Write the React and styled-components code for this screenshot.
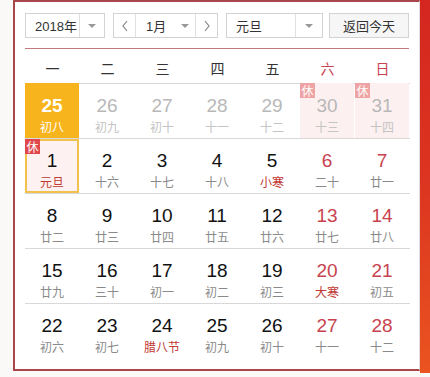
import React from "react";
import styled, { createGlobalStyle } from "styled-components";

const Global = createGlobalStyle`
  html, body { margin: 0; padding: 0; background: #fbf8f8; }
  body { font-family: "Liberation Sans", "Noto Sans CJK SC", sans-serif; }
`;

const Page = styled.div`
  display: flex;
  align-items: flex-start;
  padding-left: 13px;
  width: 430px;
  height: 377px;
  box-sizing: border-box;
  overflow: hidden;
`;

const Panel = styled.div`
  width: 407px;
  height: 371px;
  box-sizing: border-box;
  background: #fff;
  border: 2px solid #a8464b;
  border-right: 1px solid #e2dede;
  padding: 11px 9px 0 10px;
  display: flex;
  flex-direction: column;
`;

const Strip = styled.div`
  width: 10px;
  height: 373px;
  background: linear-gradient(180deg, #d4261f 0%, #dc3520 50%, #ea5420 100%);
`;

const Toolbar = styled.div`
  display: flex;
  align-items: center;
  height: 25px;
  gap: 8px;
`;

const Box = styled.div`
  display: flex;
  align-items: stretch;
  height: 25px;
  box-sizing: border-box;
  border: 1px solid #d3d3d3;
  background: #fff;
  width: ${(p) => p.$w}px;
  margin-right: ${(p) => p.$mr || 0}px;
`;

const BoxText = styled.div`
  flex: 1;
  display: flex;
  align-items: center;
  white-space: nowrap;
  padding-left: ${(p) => p.$pl}px;
  font-size: 13px;
  color: #333;
  font-family: "Liberation Sans", "Noto Sans CJK SC", sans-serif;
`;

const ArrowCell = styled.div`
  width: ${(p) => p.$w}px;
  flex-shrink: 0;
  border-left: 1px solid #e0e0e0;
  display: flex;
  align-items: center;
  justify-content: center;
`;

const ArrowNoBorder = styled.div`
  width: 20px;
  display: flex;
  align-items: center;
  justify-content: center;
`;

const Tri = styled.span`
  width: 0;
  height: 0;
  border-left: 4px solid transparent;
  border-right: 4px solid transparent;
  border-top: 4px solid #999;
`;

const NavBtn = styled.div`
  width: 21px;
  flex-shrink: 0;
  display: flex;
  align-items: center;
  justify-content: center;
  border-left: ${(p) => (p.$left ? "1px solid #e0e0e0" : "none")};
  border-right: ${(p) => (p.$right ? "1px solid #e0e0e0" : "none")};
`;

const TodayBtn = styled.div`
  width: 80px;
  height: 25px;
  box-sizing: border-box;
  border: 1px solid #d3d3d3;
  background: #f6f6f6;
  display: flex;
  align-items: center;
  justify-content: center;
  font-size: 13px;
  color: #333;
  font-family: "Noto Sans CJK SC", sans-serif;
`;

const Rule = styled.div`
  height: 1px;
  background: #c07a7d;
  margin-top: 10px;
  width: 384px;
`;

const Grid = styled.div`
  display: grid;
  grid-template-columns: repeat(7, 55px);
`;

const Head = styled.div`
  height: 34px;
  display: flex;
  align-items: center;
  justify-content: center;
  padding-top: 3px;
  box-sizing: border-box;
  font-size: 14px;
  font-family: "Noto Sans CJK SC", sans-serif;
  color: ${(p) => (p.$red ? "#c8424f" : "#333")};
`;

const Row = styled.div`
  display: grid;
  grid-template-columns: repeat(7, 55px);
  border-top: 1px solid #d8d8d8;
  height: 55px;
  box-sizing: border-box;
  width: 385px;
`;

const Cell = styled.div`
  position: relative;
  width: 54px;
  height: ${(p) => (p.$fill ? 55 : 54)}px;
  margin-top: ${(p) => (p.$fill ? -1 : 0)}px;
  box-sizing: border-box;
  background: ${(p) => p.$bg || "transparent"};
  border: ${(p) => (p.$sel ? "2px solid #f3c24c" : "none")};
  display: flex;
  flex-direction: column;
  align-items: center;
  padding-top: ${(p) => (p.$sel ? 10 : p.$fill ? 13 : 12)}px;
`;

const Num = styled.div`
  font-size: 19px;
  line-height: 19px;
  font-family: "Liberation Sans", sans-serif;
  font-weight: ${(p) => (p.$bold ? 700 : 400)};
  color: ${(p) => p.$c};
`;

const Lunar = styled.div`
  font-size: 12px;
  line-height: 14px;
  margin-top: 5px;
  font-family: "Noto Sans CJK SC", sans-serif;
  color: ${(p) => p.$c};
`;

const Badge = styled.div`
  position: absolute;
  top: ${(p) => p.$off}px;
  left: ${(p) => p.$off}px;
  width: 15px;
  height: 15px;
  background: ${(p) => p.$bg};
  color: #fff;
  font-size: 12px;
  line-height: 15px;
  text-align: center;
  font-family: "Noto Sans CJK SC", sans-serif;
`;

const Chevron = ({ dir }) => (
  <svg width="8" height="12" viewBox="0 0 8 12">
    <polyline
      points={dir === "l" ? "6,1 2,6 6,11" : "2,1 6,6 2,11"}
      fill="none"
      stroke="#888"
      strokeWidth="1.2"
    />
  </svg>
);

const RED = "#c8424f";
const TERM = "#c23832";

const rows = [
  [
    { n: 25, l: "初八", today: true },
    { n: 26, l: "初九", prev: true },
    { n: 27, l: "初十", prev: true },
    { n: 28, l: "十一", prev: true },
    { n: 29, l: "十二", prev: true },
    { n: 30, l: "十三", prev: true, hol: true },
    { n: 31, l: "十四", prev: true, hol: true },
  ],
  [
    { n: 1, l: "元旦", sel: true, term: true },
    { n: 2, l: "十六" },
    { n: 3, l: "十七" },
    { n: 4, l: "十八" },
    { n: 5, l: "小寒", term: true },
    { n: 6, l: "二十", we: true },
    { n: 7, l: "廿一", we: true },
  ],
  [
    { n: 8, l: "廿二" },
    { n: 9, l: "廿三" },
    { n: 10, l: "廿四" },
    { n: 11, l: "廿五" },
    { n: 12, l: "廿六" },
    { n: 13, l: "廿七", we: true },
    { n: 14, l: "廿八", we: true },
  ],
  [
    { n: 15, l: "廿九" },
    { n: 16, l: "三十" },
    { n: 17, l: "初一" },
    { n: 18, l: "初二" },
    { n: 19, l: "初三" },
    { n: 20, l: "大寒", we: true, term: true },
    { n: 21, l: "初五", we: true },
  ],
  [
    { n: 22, l: "初六" },
    { n: 23, l: "初七" },
    { n: 24, l: "腊八节", term: true },
    { n: 25, l: "初九" },
    { n: 26, l: "初十" },
    { n: 27, l: "十一", we: true },
    { n: 28, l: "十二", we: true },
  ],
];

function Day({ d }) {
  let numC = "#111";
  let lunC = "#8a8a8a";
  let bg;
  if (d.we) numC = RED;
  if (d.term) lunC = TERM;
  if (d.prev) {
    numC = "#b8b8b8";
    lunC = "#c4c4c4";
  }
  if (d.hol) bg = "#fdf0f0";
  if (d.sel) bg = "#fdf1f1";
  if (d.today) {
    bg = "#f8b41c";
    numC = "#fff";
    lunC = "#fff";
  }
  return (
    <Cell $bg={bg} $sel={d.sel} $fill={d.today || d.hol}>
      {d.sel && <Badge $bg="#e0484e" $off={-2}>休</Badge>}
      {d.hol && <Badge $bg="#eea4a4" $off={0}>休</Badge>}
      <Num $c={numC} $bold={d.today}>{d.n}</Num>
      <Lunar $c={lunC}>{d.l}</Lunar>
    </Cell>
  );
}

export default function App() {
  const heads = ["一", "二", "三", "四", "五", "六", "日"];
  return (
    <>
      <Global />
      <Page>
        <Panel>
          <Toolbar>
            <Box $w={80}>
              <BoxText $pl={9}>2018年</BoxText>
              <ArrowCell $w={24}>
                <Tri />
              </ArrowCell>
            </Box>
            <Box $w={105}>
              <NavBtn $right>
                <Chevron dir="l" />
              </NavBtn>
              <BoxText $pl={10}>1月</BoxText>
              <ArrowNoBorder>
                <Tri />
              </ArrowNoBorder>
              <NavBtn $left>
                <Chevron dir="r" />
              </NavBtn>
            </Box>
            <Box $w={97} $mr={-2}>
              <BoxText $pl={9}>元旦</BoxText>
              <ArrowCell $w={26}>
                <Tri />
              </ArrowCell>
            </Box>
            <TodayBtn>返回今天</TodayBtn>
          </Toolbar>
          <Rule />
          <Grid>
            {heads.map((h, i) => (
              <Head key={h} $red={i >= 5}>
                {h}
              </Head>
            ))}
          </Grid>
          {rows.map((r, i) => (
            <Row key={i}>
              {r.map((d, j) => (
                <Day key={j} d={d} />
              ))}
            </Row>
          ))}
        </Panel>
        <Strip />
      </Page>
    </>
  );
}
